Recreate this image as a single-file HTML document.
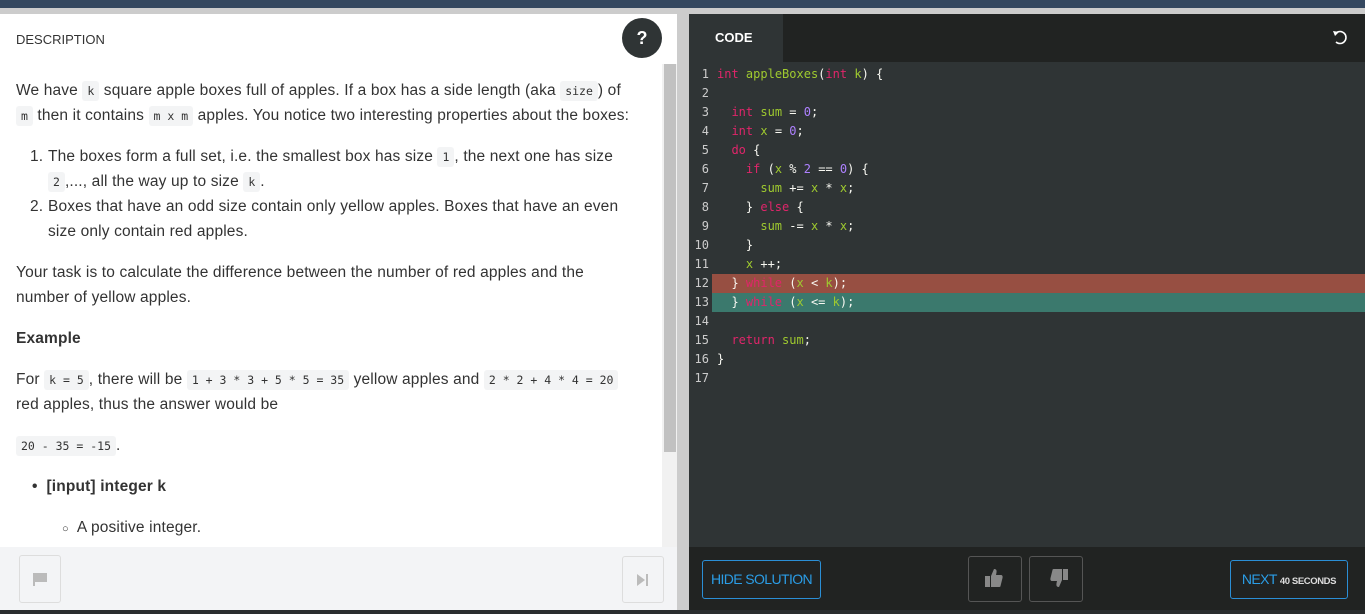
<!DOCTYPE html>
<html><head><style>
*{margin:0;padding:0;box-sizing:border-box}
body{width:1365px;height:614px;overflow:hidden;background:#ccc;font-family:"Liberation Sans",sans-serif;position:relative}
.top{position:absolute;left:0;top:0;width:1365px;height:8px;background:#34475f}
.left{position:absolute;left:0;top:14px;width:677px;height:596px;background:#fff}
.hdr{position:absolute;left:16px;top:18px;font-size:13px;color:#333;letter-spacing:0}
.help{position:absolute;left:622px;top:4px;width:40px;height:40px;border-radius:50%;background:#2f3435;color:#fff;font-weight:bold;font-size:18px;text-align:center;line-height:40px}
.scroll{position:absolute;left:662px;top:50px;width:15px;height:484px;background:#f1f1f1}
.thumb{position:absolute;left:2px;top:0;width:12px;height:388px;background:#c1c1c1}
.l{position:absolute;white-space:nowrap;font-size:15.5px;color:#333;line-height:20px;letter-spacing:0.15px}
code{font-family:"DejaVu Sans Mono",monospace;font-size:11.5px;background:#f3f4f5;padding:3px 5px;border-radius:3px;letter-spacing:0;color:#333}
.lbot{position:absolute;left:0;top:533px;width:677px;height:63px;background:#f3f4f6}
.btnl{position:absolute;width:42px;height:48px;border:1px solid #ddd;border-radius:3px;background:#f3f4f6}
.div{position:absolute;left:677px;top:14px;width:12px;height:596px;background:#ccc}
.right{position:absolute;left:689px;top:14px;width:676px;height:596px;background:#2f3435}
.tabs{position:absolute;left:0;top:0;width:676px;height:48px;background:#212322}
.tab{position:absolute;left:0;top:0;width:94px;height:48px;background:#2f3435;color:#fff;font-weight:bold;font-size:13px;line-height:48px;padding-left:26px}
.code{position:absolute;left:0;top:51px;width:676px;font-family:"DejaVu Sans Mono",monospace;font-size:12px;line-height:19px;color:#f8f8f2}
.ln{display:inline-block;width:20px;text-align:right;color:#ccc;margin-right:8px}
.row{height:19px;white-space:pre;position:relative}
.k{color:#e0256a}.g{color:#9fca2f}.n{color:#ae81ff}
.rbot{position:absolute;left:0;top:533px;width:676px;height:63px;background:#212322}
.ob{position:absolute;border:1px solid #2b8fd6;border-radius:3px;color:#2b9de6;font-size:14px;letter-spacing:-0.6px;text-align:center}
.tb{position:absolute;top:9px;width:54px;height:46px;border:1px solid #555;border-radius:3px}
</style></head><body>
<div class="top"></div>
<div class="left">
<div class="hdr">DESCRIPTION</div>
<div class="help">?</div>
<div class="scroll"><div class="thumb"></div></div>
<div class="l" style="left:16px;top:67px">We have <code>k</code> square apple boxes full of apples. If a box has a side length (aka <code>size</code>) of</div>
<div class="l" style="left:16px;top:92px"><code>m</code> then it contains <code>m x m</code> apples. You notice two interesting properties about the boxes:</div>
<div class="l" style="left:30px;top:133px">1.</div>
<div class="l" style="left:48px;top:133px">The boxes form a full set, i.e. the smallest box has size <code>1</code>, the next one has size</div>
<div class="l" style="left:48px;top:158px"><code>2</code>,..., all the way up to size <code>k</code>.</div>
<div class="l" style="left:30px;top:183px">2.</div>
<div class="l" style="left:48px;top:183px">Boxes that have an odd size contain only yellow apples. Boxes that have an even</div>
<div class="l" style="left:48px;top:208px">size only contain red apples.</div>
<div class="l" style="left:16px;top:249px">Your task is to calculate the difference between the number of red apples and the</div>
<div class="l" style="left:16px;top:274px">number of yellow apples.</div>
<div class="l" style="left:16px;top:315px;font-weight:bold">Example</div>
<div class="l" style="left:16px;top:356px">For <code>k = 5</code>, there will be <code>1 + 3 * 3 + 5 * 5 = 35</code> yellow apples and <code>2 * 2 + 4 * 4 = 20</code></div>
<div class="l" style="left:16px;top:381px">red apples, thus the answer would be</div>
<div class="l" style="left:16px;top:422px"><code>20 - 35 = -15</code>.</div>
<div class="l" style="left:32px;top:463px;font-weight:bold">•&nbsp;&nbsp;[input] integer k</div>
<div class="l" style="left:62px;top:504px"><span style="font-size:11px">○</span>&nbsp; A positive integer.</div>
<div class="lbot">
<div class="btnl" style="left:19px;top:8px"><svg width="42" height="48"><path d="M13 17h2v13h-2zM15 17h12v9H15z" fill="#bbb"/></svg></div>
<div class="btnl" style="left:622px;top:9px;height:47px"><svg width="42" height="46"><path d="M14 17l8 6-8 6z" fill="#bbb"/><rect x="23" y="17" width="2" height="12" fill="#bbb"/></svg></div>
</div>
</div>
<div class="div"></div>
<div class="right">
<div class="tabs"><div class="tab">CODE</div>
<svg style="position:absolute;left:642px;top:14px" width="18" height="18" viewBox="0 0 18 18"><path d="M5 5A6 6 0 1 1 5 14" fill="none" stroke="#fff" stroke-width="1.6"/><path d="M2 3l6 1-4 4z" fill="#fff"/></svg></div>
<div class="code">
<div class="row"><span class="ln">1</span><span class="k">int</span> <span class="g">appleBoxes</span>(<span class="k">int</span> <span class="g">k</span>) {</div>
<div class="row"><span class="ln">2</span></div>
<div class="row"><span class="ln">3</span>  <span class="k">int</span> <span class="g">sum</span> = <span class="n">0</span>;</div>
<div class="row"><span class="ln">4</span>  <span class="k">int</span> <span class="g">x</span> = <span class="n">0</span>;</div>
<div class="row"><span class="ln">5</span>  <span class="k">do</span> {</div>
<div class="row"><span class="ln">6</span>    <span class="k">if</span> (<span class="g">x</span> % <span class="n">2</span> == <span class="n">0</span>) {</div>
<div class="row"><span class="ln">7</span>      <span class="g">sum</span> += <span class="g">x</span> * <span class="g">x</span>;</div>
<div class="row"><span class="ln">8</span>    } <span class="k">else</span> {</div>
<div class="row"><span class="ln">9</span>      <span class="g">sum</span> -= <span class="g">x</span> * <span class="g">x</span>;</div>
<div class="row"><span class="ln">10</span>    }</div>
<div class="row"><span class="ln">11</span>    <span class="g">x</span> ++;</div>
<div class="row"><span class="ln">12</span><span style="position:absolute;left:23px;top:0;width:653px;height:19px;background:#974f42"></span><span style="position:relative">  } <span class="k">while</span> (<span class="g">x</span> &lt; <span class="g">k</span>);</span></div>
<div class="row"><span class="ln">13</span><span style="position:absolute;left:23px;top:0;width:653px;height:19px;background:#3b796d"></span><span style="position:relative">  } <span class="k">while</span> (<span class="g">x</span> &lt;= <span class="g">k</span>);</span></div>
<div class="row"><span class="ln">14</span></div>
<div class="row"><span class="ln">15</span>  <span class="k">return</span> <span class="g">sum</span>;</div>
<div class="row"><span class="ln">16</span>}</div>
<div class="row"><span class="ln">17</span></div>
</div>
<div class="rbot">
<div class="ob" style="left:13px;top:13px;width:119px;height:39px;line-height:37px">HIDE SOLUTION</div>
<div class="tb" style="left:279px"><svg width="54" height="46"><path d="M16 19h5v11h-5zM22 19l3-7c3 0 3 2 2 6h5c1 0 2 1 1.5 3l-2 8c0 1-1 1-2 1h-7.5z" fill="#888"/></svg></div>
<div class="tb" style="left:340px"><svg width="54" height="46"><path d="M33 12h5v11h-5zM32 23l-3 7c-3 0-3-2-2-6h-5c-1 0-2-1-1.5-3l2-8c0-1 1-1 2-1h7.5z" fill="#888"/></svg></div>
<div class="ob" style="left:541px;top:13px;width:118px;height:39px;line-height:37px">NEXT <span style="font-size:9.5px;font-weight:bold;color:#ddd;letter-spacing:-0.4px">40 SECONDS</span></div>
</div>
</div>
<div style="position:absolute;left:0;top:610px;width:1365px;height:4px;background:#2a2d2e"></div>
</body></html>
